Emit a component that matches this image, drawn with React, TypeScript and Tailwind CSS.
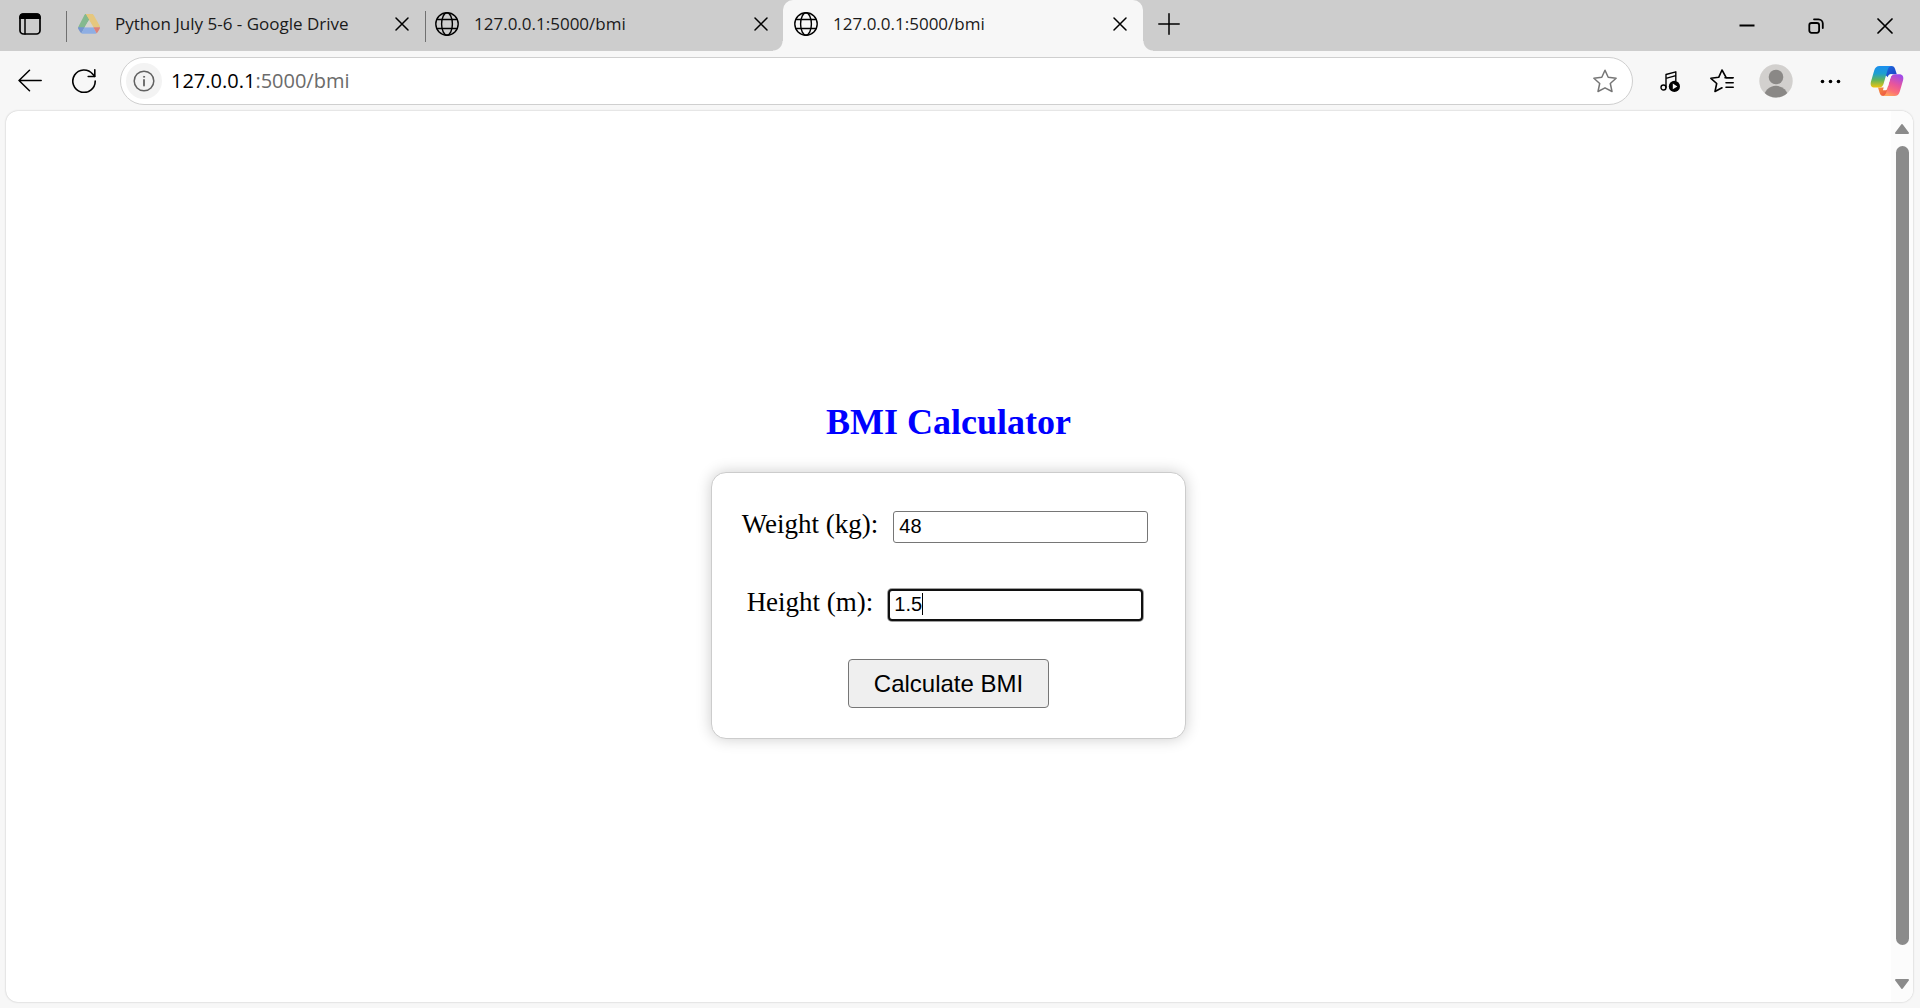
import { useState } from "react";
import type { ReactNode } from "react";

const LINE = { fill: "none", stroke: "currentColor", strokeLinecap: "round", strokeLinejoin: "round" } as const;

function WorkspacesIcon() {
  return (
    <svg className="size-6" viewBox="0 0 24 24">
      <rect x="2" y="2.2" width="20" height="19.8" rx="3.6" {...LINE} strokeWidth="1.7" />
      <path d="M1.2 7V5a3.8 3.8 0 0 1 3.8-3.8h14A3.8 3.8 0 0 1 22.8 5v2z" fill="currentColor" />
      <path d="M7 7v15" {...LINE} strokeWidth="1.5" />
    </svg>
  );
}

function DriveIcon() {
  return (
    <svg className="h-6 w-[22px]" viewBox="0 0 22 24">
      <path d="M7.500 2h7L6.600 15.400 3.400 20.800.6 16.300Q0 15.400.5 14.400L6.300 3.300Q6.800 2.200 7.500 2z" fill="#84b98f" />
      <path d="M7.500 2h7L11 8z" fill="#6ba578" />
      <path d="M7.500 2h7q.8.200 1.300 1.200l6 10.800q.3.700.2 1.300h-6.600z" fill="#e5c77e" />
      <path d="M7.500 2 11 8l-1.500 2.500L6.600 4.200q.2-1.600.9-2.200z" fill="#84b98f" />
      <path d="M0 15.300h6.600L3.400 21.300q-.7-.3-1.100-1L.3 17q-.3-.8-.3-1.700z" fill="#7695d0" />
      <path d="M6.600 15.300h8.800l3.200 6q-.4.400-1.200.4H4.600q-.8 0-1.200-.4z" fill="#8eaee3" />
      <path d="M15.400 15.300H22q0 .9-.4 1.700l-2 3.300q-.4.700-1 1z" fill="#dd8178" />
      <path d="M11 8 6.700 15.300h8.600z" fill="#d6d4cd" />
    </svg>
  );
}

function GlobeIcon() {
  return (
    <svg className="size-6" viewBox="0 0 24 24" {...LINE} strokeWidth="1.4">
      <circle cx="12" cy="12" r="11.2" />
      <ellipse cx="12" cy="12" rx="5.400" ry="11.2" />
      <path d="M2 7.500h20M2 16.500h20" />
    </svg>
  );
}

function CrossIcon() {
  return (
    <svg className="size-[14px]" viewBox="0 0 14 14" {...LINE} strokeWidth="1.500">
      <path d="M1 1l12 12M13 1 1 13" />
    </svg>
  );
}

function Tab({ title, icon, active = false }: { title: string; icon: ReactNode; active?: boolean }) {
  return (
    <div
      role="tab"
      aria-selected={active}
      className={
        active
          ? "relative flex w-[360px] shrink-0 items-center rounded-t-[10px] bg-[#f7f7f7] pr-4 pb-1 pl-[11px]"
          : "relative flex w-[358px] shrink-0 items-center pr-4 pb-1 pl-[9px]"
      }
    >
      {icon}
      <span className="ml-[15px] flex-1 truncate text-[17px] leading-6 text-[#1a1a1a]">{title}</span>
      <button type="button" aria-label={`Close ${title}`} className="p-0">
        <CrossIcon />
      </button>
      {active && (
        <>
          <span className="absolute bottom-0 -left-[10px] size-[10px] bg-[radial-gradient(circle_at_0_0,#cdcdcd_9px,#f7f7f7_10px)]" />
          <span className="absolute -right-[10px] bottom-0 size-[10px] bg-[radial-gradient(circle_at_100%_0,#cdcdcd_9px,#f7f7f7_10px)]" />
        </>
      )}
    </div>
  );
}

function TabStrip() {
  return (
    <header className="flex h-[51px] shrink-0 bg-[#cdcdcd] text-black">
      <button type="button" aria-label="Workspaces" className="flex w-[66px] shrink-0 items-center pb-1 pl-[18px]">
        <WorkspacesIcon />
      </button>
      <div role="tablist" className="-mr-px flex">
        <span className="mt-[11px] h-[31px] w-px bg-[#707070]" />
        <Tab title="Python July 5-6 - Google Drive" icon={<span className="ml-[2px]"><DriveIcon /></span>} />
        <span className="mt-[11px] h-[31px] w-px bg-[#707070]" />
        <Tab title="127.0.0.1:5000/bmi" icon={<GlobeIcon />} />
        <div className="-ml-px flex">
          <Tab title="127.0.0.1:5000/bmi" icon={<GlobeIcon />} active />
        </div>
      </div>
      <button type="button" aria-label="New tab" className="flex w-[54px] items-center justify-center pb-1">
        <svg className="size-[22px]" viewBox="0 0 22 22" {...LINE} strokeWidth="1.500">
          <path d="M11 .8v20.400M.8 11h20.400" />
        </svg>
      </button>
      <div className="ml-auto flex pr-px">
        <button type="button" aria-label="Minimize" className="flex w-[69px] items-center justify-center">
          <svg className="size-4" viewBox="0 0 16 16">
            <path d="M.5 7.500h15" stroke="currentColor" strokeWidth="2" />
          </svg>
        </button>
        <button type="button" aria-label="Restore" className="flex w-[69px] items-center justify-center">
          <svg className="size-4" viewBox="0 0 16 16" {...LINE} strokeWidth="1.800">
            <rect x="1.300" y="5" width="9.800" height="9.800" rx="2.200" />
            <path d="M6 1.300h4.500a4.300 4.300 0 0 1 4.300 4.300V10" />
          </svg>
        </button>
        <button type="button" aria-label="Close window" className="flex w-[69px] items-center justify-center">
          <svg className="size-4" viewBox="0 0 16 16" {...LINE} strokeWidth="1.700">
            <path d="M1 1l14 14M15 1 1 15" />
          </svg>
        </button>
      </div>
    </header>
  );
}

function CopilotIcon() {
  return (
    <svg className="h-8 w-[34px]" viewBox="0 0 34 32">
      <defs>
        <linearGradient id="leftLobe" x1="0" y1="0" x2="0" y2="1">
          <stop offset="0" stopColor="#1b8ff0" />
          <stop offset=".35" stopColor="#1e9fd0" />
          <stop offset=".65" stopColor="#62b45a" />
          <stop offset="1" stopColor="#f4c40c" />
        </linearGradient>
        <linearGradient id="rightLobe" x1=".7" y1="0" x2=".3" y2="1">
          <stop offset="0" stopColor="#a04be8" />
          <stop offset=".45" stopColor="#e8559c" />
          <stop offset=".75" stopColor="#fb6f78" />
          <stop offset="1" stopColor="#ffa45c" />
        </linearGradient>
        <linearGradient id="topFold" x1="0" y1="0" x2="1" y2="1">
          <stop offset="0" stopColor="#1f6fe0" />
          <stop offset="1" stopColor="#1b3fc4" />
        </linearGradient>
        <linearGradient id="bottomFold" x1="0" y1="0" x2="1" y2="1">
          <stop offset="0" stopColor="#f6a03a" />
          <stop offset="1" stopColor="#ec3f4a" />
        </linearGradient>
      </defs>
      <path d="M17 1h4.500c2 0 3 1.200 3.600 3l1.700 5.200h-5.300c-2 0-3 1.300-3.500 3L13 8z" fill="url(#topFold)" />
      <path d="M17.500 31h-4.200c-2 0-3-1.300-3.600-3L8 22.600h5.200c2 0 3-1.200 3.500-2.900L21 25z" fill="url(#bottomFold)" />
      <path d="M9.500 1h12c-2.300.2-3.200 1.800-3.900 4L13.500 19c-.7 2.400-2.300 3.600-4.700 3.600H5c-3.800 0-5-2.700-4-6.200L4.200 5.600C5.100 2.500 6.700 1 9.500 1z" fill="url(#leftLobe)" />
      <path d="M24.500 31h-12c2.300-.2 3.200-1.800 3.900-4l4.100-14.200c.7-2.400 2.300-3.600 4.700-3.600H29c3.800 0 5 2.700 4 6.200l-3.200 11c-.9 3.100-2.500 4.600-5.300 4.600z" fill="url(#rightLobe)" />
      <path d="M18.600 10.300q.9-1.100 2.400-1.100h1.500q-1.500 1.200-2 3.600l-3 10q-.7 2.500-1.600 2.500h-3l1.600-5.700z" fill="#fbfbfb" />
    </svg>
  );
}

function Toolbar() {
  return (
    <nav className="flex h-[60px] shrink-0 items-center bg-[#f7f7f7] text-black">
      <button type="button" aria-label="Back" className="ml-[18px]">
        <svg className="size-6" viewBox="0 0 24 24" {...LINE} strokeWidth="1.500">
          <path d="M23.200 11.500H1M11.500 1.300 1 11.500l10.500 10.200" />
        </svg>
      </button>
      <button type="button" aria-label="Refresh" className="ml-[30px]">
        <svg className="size-6" viewBox="0 0 24 24" {...LINE} strokeWidth="1.600">
          <path d="M23.200 12A11.200 11.200 0 1 1 20.600 5L22.600 7.300" />
          <path d="M22.800.8v6.700h-6.600" />
        </svg>
      </button>
      <div className="ml-6 flex h-12 flex-1 items-center rounded-full border border-[#cfcfcf] bg-white pr-[15px] pl-[5px]">
        <button type="button" aria-label="View site information" className="flex size-9 items-center justify-center rounded-full bg-[#f3f3f3] text-[#616161]">
          <svg className="size-[22px]" viewBox="0 0 22 22" {...LINE} strokeWidth="1.500">
            <circle cx="11" cy="11" r="9.800" />
            <path d="M11 10v5.500" strokeWidth="1.800" />
            <circle cx="11" cy="6.800" r=".6" fill="currentColor" strokeWidth=".8" />
          </svg>
        </button>
        <span className="ml-[9px] flex-1 text-[20px] leading-7">
          127.0.0.1<span className="text-[#6b6b6b]">:5000/bmi</span>
        </span>
        <button type="button" aria-label="Add to favorites" className="text-[#767676]">
          <svg className="size-6" viewBox="0 0 24 24" {...LINE} strokeWidth="1.500">
            <path d="M12 1.200l3.200 7.100 7.900 1-5.800 5.200 1.700 8L12 18.800l-7 3.700 1.700-8L.9 9.300l7.900-1z" />
          </svg>
        </button>
      </div>
      <div className="flex items-center pl-[27px]">
        <button type="button" aria-label="Media control">
          <svg className="size-6" viewBox="0 0 24 24" {...LINE} strokeWidth="1.400">
            <circle cx="3.500" cy="18.500" r="2.500" />
            <path d="M6 18.500V5.500L15.800 2.800v9M6 9.300 15.800 6.600" />
            <circle cx="14.400" cy="17.400" r="5.600" fill="currentColor" stroke="none" />
            <path d="M12.800 14.600v5.600l4.600-2.800z" fill="#f7f7f7" stroke="none" />
          </svg>
        </button>
        <button type="button" aria-label="Favorites" className="ml-[26px]">
          <svg className="size-6" viewBox="0 0 24 24" {...LINE} strokeWidth="1.600">
            <path d="M22.500 8.700h-6.300L12 1 8.700 8.300.9 9.300l5.800 5.200-1.700 8 7-3.700" />
            <path d="M15 8.700h8.200M16 13.700h7.200M16 18.200h7.200" />
          </svg>
        </button>
        <button type="button" aria-label="Profile" className="ml-[25px]">
          <svg className="size-[34px]" viewBox="0 0 34 34">
            <clipPath id="avatarClip">
              <circle cx="17" cy="17" r="16.500" />
            </clipPath>
            <circle cx="17" cy="17" r="16.700" fill="#d2d0ce" />
            <g clipPath="url(#avatarClip)" fill="#8a8886">
              <circle cx="17" cy="13" r="7.300" />
              <circle cx="17" cy="34" r="12.200" />
            </g>
          </svg>
        </button>
        <button type="button" aria-label="Settings and more" className="ml-[26px]">
          <svg className="size-6" viewBox="0 0 24 24" fill="currentColor">
            <circle cx="3.500" cy="12.500" r="1.800" />
            <circle cx="11.500" cy="12.500" r="1.800" />
            <circle cx="19.500" cy="12.500" r="1.800" />
          </svg>
        </button>
        <button type="button" aria-label="Copilot" className="mr-4 ml-[27px]">
          <CopilotIcon />
        </button>
      </div>
    </nav>
  );
}

function ScrollArrow({ down = false }: { down?: boolean }) {
  return (
    <svg className="h-3 w-4" viewBox="0 0 16 12" fill="#8b8b8b" stroke="#8b8b8b" strokeWidth="2" strokeLinejoin="round">
      <path d={down ? "M2 2h12L8 10z" : "M2 10h12L8 2z"} />
    </svg>
  );
}

function ScrollBar() {
  return (
    <div className="flex w-[22px] shrink-0 flex-col items-center bg-[#fcfcfc] pt-3 pb-3">
      <ScrollArrow />
      <div className="mt-[11px] mb-[33px] w-[13px] flex-1 rounded-full bg-[#8b8b8b]" />
      <ScrollArrow down />
    </div>
  );
}

function BmiForm() {
  const [weight, setWeight] = useState("48");
  const [height, setHeight] = useState("1.5");
  const unchanged = height === "1.5";
  return (
    <main className="flex flex-1 flex-col items-center justify-center font-['Liberation_Serif',serif] text-black">
      <h2 className="mt-7 mb-[30px] text-[36px] leading-10 font-bold text-[#0000ff]">BMI Calculator</h2>
      <form
        onSubmit={(e) => e.preventDefault()}
        className="flex flex-col items-center rounded-[15px] border border-[#cccccc] bg-white px-[30px] pt-[38px] pb-[30px] shadow-[0_0_15px_rgba(0,0,0,0.2)]"
      >
        <div className="mr-[7px] flex h-8 items-start gap-[15px]">
          <label htmlFor="weight" className="text-[27px] leading-[26px]">Weight (kg):</label>
          <input
            id="weight"
            value={weight}
            onChange={(e) => setWeight(e.target.value)}
            className="h-8 w-[255px] rounded-[3px] border border-[#767676] bg-white px-[5px] pb-[2px] font-['Liberation_Sans',sans-serif] text-[20px] leading-6"
          />
        </div>
        <div className="mt-[46px] mr-[7px] flex h-8 items-start gap-[15px]">
          <label htmlFor="height" className="text-[27px] leading-[26px]">Height (m):</label>
          <div className="relative">
            <input
              id="height"
              value={height}
              onChange={(e) => setHeight(e.target.value)}
              className="block h-8 w-[255px] rounded-[4px] border-2 border-[#101010] bg-white px-1 pb-[2px] font-['Liberation_Sans',sans-serif] text-[20px] leading-6 ring-1 ring-[#101010]/40 outline-none"
            />
            {unchanged && <span className="absolute top-1 left-[34px] h-[22px] w-px bg-black" />}
          </div>
        </div>
        <button
          type="submit"
          className="mt-[38px] rounded-[4px] border border-[#767676] bg-[#efefef] px-[25px] py-[10px] font-['Liberation_Sans',sans-serif] text-[24px] leading-[27px]"
        >
          Calculate BMI
        </button>
      </form>
    </main>
  );
}

export default function App() {
  return (
    <div className="flex h-screen flex-col bg-[#f7f7f7] font-['Open_Sans',sans-serif]">
      <TabStrip />
      <Toolbar />
      <div className="mr-[7px] mb-[6px] ml-[6px] flex min-h-0 flex-1 overflow-hidden rounded-[12px] bg-white shadow-[0_0_2px_rgba(0,0,0,0.25)]">
        <BmiForm />
        <ScrollBar />
      </div>
    </div>
  );
}
